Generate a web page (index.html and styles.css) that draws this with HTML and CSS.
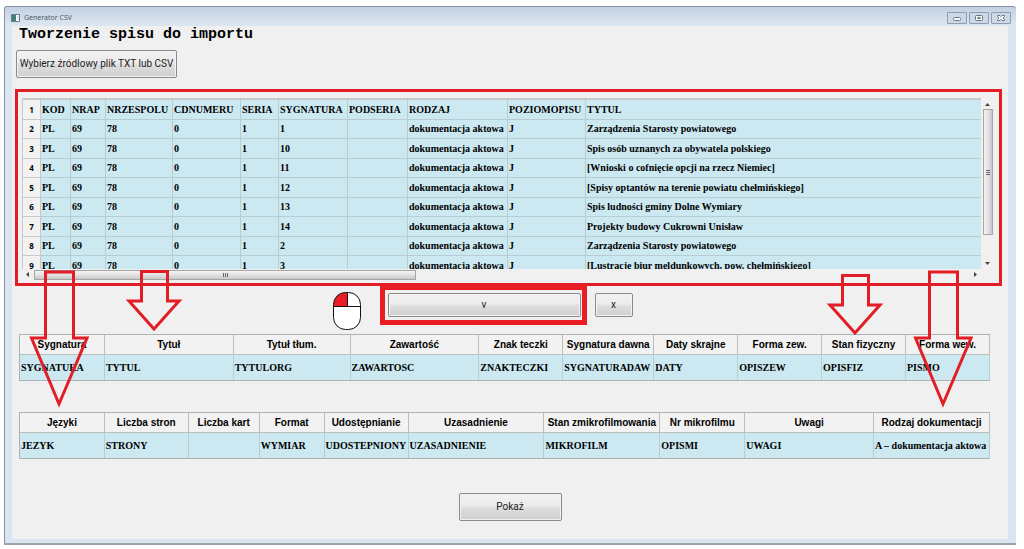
FILE: index.html
```
<!DOCTYPE html>
<html lang="pl">
<head>
<meta charset="utf-8">
<meta name="viewport" content="width=device-width, initial-scale=1">
<title>Generator CSV</title>
<link rel="stylesheet" href="styles.css">
</head>
<body>
<div class="window">
  <header class="titlebar">
    <svg class="app-icon" viewBox="0 0 9 8" aria-hidden="true"><rect x=".5" y=".5" width="8" height="7" fill="#fff" stroke="#6d7f8c"/><rect x="1" y="1" width="4" height="6" fill="#3f7f78"/><rect x="6" y="2" width="2" height="4" fill="#dfe9ee"/></svg>
    <span class="caption">Generator CSV</span>
    <div class="caption-buttons">
      <button class="caption-button" type="button" aria-label="Minimalizuj"><svg viewBox="0 0 8 8"><rect x=".5" y="3.500" width="7" height="3" rx="1"/></svg></button>
      <button class="caption-button" type="button" aria-label="Maksymalizuj"><svg viewBox="0 0 8 8"><rect x=".5" y="1.500" width="7" height="5" rx="1"/><rect x="3" y="3.500" width="2" height="1"/></svg></button>
      <button class="caption-button" type="button" aria-label="Zamknij"><svg viewBox="0 0 8 8"><path d="M.5 1.500h2.500l1 1 1-1h2.500v1L6 4l1.500 1.500v1H5l-1-1-1 1H.5v-1L2 4 .5 2.500z"/></svg></button>
    </div>
  </header>
  <main class="client">
    <h1 class="heading">Tworzenie spisu do importu</h1>
    <button class="button button-file" type="button">Wybierz źródłowy plik TXT lub CSV</button>

    <section class="preview">
      <div class="viewport">
        <table class="data">
          <colgroup><col class="w19"><col class="w30"><col class="w35"><col class="w67"><col class="w68"><col class="w38"><col class="w69"><col class="w60"><col class="w100"><col class="w78"><col></colgroup>
          <tbody>
            <tr><th scope="row">1</th><td>KOD</td><td>NRAP</td><td>NRZESPOLU</td><td>CDNUMERU</td><td>SERIA</td><td>SYGNATURA</td><td>PODSERIA</td><td>RODZAJ</td><td>POZIOMOPISU</td><td>TYTUL</td></tr>
            <tr><th scope="row">2</th><td>PL</td><td>69</td><td>78</td><td>0</td><td>1</td><td>1</td><td></td><td>dokumentacja aktowa</td><td>J</td><td>Zarządzenia Starosty powiatowego</td></tr>
            <tr><th scope="row">3</th><td>PL</td><td>69</td><td>78</td><td>0</td><td>1</td><td>10</td><td></td><td>dokumentacja aktowa</td><td>J</td><td>Spis osób uznanych za obywatela polskiego</td></tr>
            <tr><th scope="row">4</th><td>PL</td><td>69</td><td>78</td><td>0</td><td>1</td><td>11</td><td></td><td>dokumentacja aktowa</td><td>J</td><td>[Wnioski o cofnięcie opcji na rzecz Niemiec]</td></tr>
            <tr><th scope="row">5</th><td>PL</td><td>69</td><td>78</td><td>0</td><td>1</td><td>12</td><td></td><td>dokumentacja aktowa</td><td>J</td><td>[Spisy optantów na terenie powiatu chełmińskiego]</td></tr>
            <tr><th scope="row">6</th><td>PL</td><td>69</td><td>78</td><td>0</td><td>1</td><td>13</td><td></td><td>dokumentacja aktowa</td><td>J</td><td>Spis ludności gminy Dolne Wymiary</td></tr>
            <tr><th scope="row">7</th><td>PL</td><td>69</td><td>78</td><td>0</td><td>1</td><td>14</td><td></td><td>dokumentacja aktowa</td><td>J</td><td>Projekty budowy Cukrowni Unisław</td></tr>
            <tr><th scope="row">8</th><td>PL</td><td>69</td><td>78</td><td>0</td><td>1</td><td>2</td><td></td><td>dokumentacja aktowa</td><td>J</td><td>Zarządzenia Starosty powiatowego</td></tr>
            <tr><th scope="row">9</th><td>PL</td><td>69</td><td>78</td><td>0</td><td>1</td><td>3</td><td></td><td>dokumentacja aktowa</td><td>J</td><td>[Lustracje biur meldunkowych, pow. chełmińskiego]</td></tr>
          </tbody>
        </table>
      </div>
      <div class="scroll-v">
        <svg class="tick" viewBox="0 0 5 3"><path d="M0 3L2.500 0 5 3z"/></svg>
        <div class="thumb-v"><svg class="grip-v" viewBox="0 0 4 5"><path d="M0 0h4v1H0zM0 2h4v1H0zM0 4h4v1H0z"/></svg></div>
        <svg class="tick" viewBox="0 0 5 3"><path d="M0 0h5L2.500 3z"/></svg>
      </div>
      <div class="scroll-h">
        <svg class="tick-side" viewBox="0 0 3 5"><path d="M3 0v5L0 2.500z"/></svg>
        <div class="thumb-h"><svg class="grip-h" viewBox="0 0 5 4"><path d="M0 0h1v4H0zM2 0h1v4H2zM4 0h1v4H4z"/></svg></div>
        <svg class="tick-side" viewBox="0 0 3 5"><path d="M0 0v5l3-2.500z"/></svg>
      </div>
    </section>

    <div class="actions">
      <div class="highlight"><button class="button button-accept" type="button">v</button></div>
      <button class="button button-clear" type="button">x</button>
    </div>

    <table class="mapping">
      <colgroup><col class="w85"><col class="w129"><col class="w117"><col class="w129"><col class="w84"><col class="w91"><col class="w84"><col class="w84"><col class="w84"><col class="w84"></colgroup>
      <thead><tr><th>Sygnatura</th><th>Tytuł</th><th>Tytuł tłum.</th><th>Zawartość</th><th>Znak teczki</th><th>Sygnatura dawna</th><th>Daty skrajne</th><th>Forma zew.</th><th>Stan fizyczny</th><th>Forma wew.</th></tr></thead>
      <tbody><tr><td>SYGNATURA</td><td>TYTUL</td><td>TYTULORG</td><td>ZAWARTOSC</td><td>ZNAKTECZKI</td><td>SYGNATURADAW</td><td>DATY</td><td>OPISZEW</td><td>OPISFIZ</td><td>PISMO</td></tr></tbody>
    </table>

    <table class="mapping">
      <colgroup><col class="w85"><col class="w84"><col class="w71"><col class="w65"><col class="w84"><col class="w136"><col class="w116"><col class="w85"><col class="w129"><col class="w116"></colgroup>
      <thead><tr><th>Języki</th><th>Liczba stron</th><th>Liczba kart</th><th>Format</th><th>Udostępnianie</th><th>Uzasadnienie</th><th>Stan zmikrofilmowania</th><th>Nr mikrofilmu</th><th>Uwagi</th><th>Rodzaj dokumentacji</th></tr></thead>
      <tbody><tr><td>JEZYK</td><td>STRONY</td><td></td><td>WYMIAR</td><td>UDOSTEPNIONY</td><td>UZASADNIENIE</td><td>MIKROFILM</td><td>OPISMI</td><td>UWAGI</td><td>A – dokumentacja aktowa</td></tr></tbody>
    </table>

    <button class="button button-show" type="button">Pokaż</button>
  </main>
</div>

<svg class="mark long long-left" viewBox="0 0 62 140" aria-hidden="true"><path d="M17.500 3H45.500V69H59L31 135 3.500 69H17.500z"/></svg>
<svg class="mark long long-right" viewBox="0 0 62 140" aria-hidden="true"><path d="M17.500 3H45.500V69H59L31 135 3.500 69H17.500z"/></svg>
<svg class="mark short short-left" viewBox="0 0 60 66" aria-hidden="true"><path d="M17.500 3.500H43.500V33H55L30 61 5 33H17.500z"/></svg>
<svg class="mark short short-right" viewBox="0 0 60 66" aria-hidden="true"><path d="M17.500 3.500H43.500V33H55L30 61 5 33H17.500z"/></svg>
<svg class="mouse" viewBox="0 0 28 40" aria-hidden="true"><rect x=".5" y="1.500" width="27" height="37" rx="12" ry="12" fill="#fff"/><path d="M14 1.500H12.500C6 1.500.5 7 .5 14v1H14z" fill="#ea1c24"/><g fill="none" stroke="#111"><rect x=".5" y="1.500" width="27" height="37" rx="12" ry="12"/><path d="M1 15.500h26M14.500 1v14.500"/></g></svg>
</body>
</html>
```
FILE: styles.css
```
* { box-sizing: border-box; }

body {
  margin: 0;
  padding: 6px 8px 4px 4px;
  min-height: 100vh;
  display: flex;
  background: #fff;
  color: #000;
  font-family: "Liberation Sans", Arial, sans-serif;
  font-size: 10px;
  position: relative;
}

.window {
  flex: 1;
  min-width: 0;
  display: flex;
  flex-direction: column;
  padding: 0 8px 4px 7px;
  border: 1px solid #8593a1;
  border-right: 0;
  border-bottom: 2px solid #98a3ae;
  border-radius: 3px 3px 0 0;
  background: linear-gradient(#c3d1e2, #dce6f1 18px, #d9e5f1);
}

/* title bar */
.titlebar {
  display: flex;
  align-items: center;
  gap: 4px;
  height: 19px;
  margin: 0 -3px 0 -1px;
  padding-top: 3px;
}
.app-icon { width: 9px; height: 8px; }
.caption {
  font-family: "Noto Sans", "Open Sans", sans-serif;
  font-size: 7px;
  line-height: 12px;
  color: #4c5968;
}
.caption-buttons { display: flex; gap: 2px; margin-left: auto; }
.caption-button {
  display: flex;
  align-items: center;
  justify-content: center;
  width: 20px;
  height: 12px;
  padding: 0;
  border: 1px solid #8e9db0;
  border-radius: 1px;
  background: #ccd8e6;
}
.caption-button svg { width: 8px; height: 8px; fill: #f4f7fa; stroke: #6b7684; }

/* client area */
.client {
  flex: 1;
  display: flex;
  flex-direction: column;
  padding: 0 6px 0 3px;
  background: #f0f0f0;
}
.heading {
  margin: 0 0 7px 4px;
  font: bold 15px/17px "Liberation Mono", "Courier New", monospace;
}
.button {
  padding: 0;
  border: 1px solid #8a8a8a;
  border-radius: 2px;
  background: linear-gradient(#f2f2f2, #ebebeb 45%, #dddddd 55%, #d0d0d0);
  box-shadow: inset 0 0 0 1px #f3f3f3;
  color: #222;
  font: 10px/14px Roboto, "Liberation Sans", Arial, sans-serif;
}
.button-file { align-self: flex-start; width: 161px; height: 28px; margin-left: 1px; }

/* source preview */
.preview {
  display: grid;
  grid-template-columns: minmax(0, 1fr) 12px;
  grid-template-rows: 171px 11px;
  margin-top: 11px;
  padding: 6px 6px 3px 4px;
  border: 3px solid #e31d25;
}
.viewport { overflow: hidden; border-top: 2px solid #c3cbcd; }
table { width: 100%; border-spacing: 0; table-layout: fixed; }
th, td { padding: 0; white-space: nowrap; overflow: hidden; }
td {
  background: #cce9f2;
  font: bold 10px/14px "Liberation Serif", "Times New Roman", serif;
}
.data th, .data td {
  height: 20px;
  padding-left: 1px;
  border-right: 1px solid #b5cdd3;
  border-bottom: 1px solid #b5cdd3;
}
.data tr:nth-child(even) > * { height: 19px; }
.data th {
  padding-left: 0;
  background: #f2f2f2;
  border-color: #c8c8c8;
  border-left: 1px solid #c8c8c8;
  font: bold 8px/12px "Open Sans", "Noto Sans", sans-serif;
}
.data td:last-child { border-right: 0; }

.scroll-v { display: flex; flex-direction: column; align-items: center; justify-content: space-between; padding: 5px 0 4px 1px; }
.tick { width: 5px; height: 3px; fill: #444; }
.thumb-v {
  width: 10px;
  height: 126px;
  margin: 3px 0 auto;
  display: flex;
  align-items: center;
  justify-content: center;
  border: 1px solid #a5a5a5;
  background: linear-gradient(90deg, #f4f4f4, #e4e4e4 50%, #c6c6cb);
}
.scroll-h { display: flex; align-items: center; padding: 0 4px; }
.tick-side { width: 3px; height: 5px; fill: #444; }
.thumb-h {
  width: 382px;
  height: 10px;
  margin: 0 auto 0 5px;
  display: flex;
  align-items: center;
  justify-content: center;
  border: 1px solid #a5a5a5;
  background: linear-gradient(#f4f4f4, #e2e2e2 50%, #c8c8c8);
}
.grip-v { width: 4px; height: 5px; fill: #666; }
.grip-h { width: 5px; height: 4px; fill: #666; }

/* transfer buttons */
.actions {
  display: flex;
  align-items: center;
  justify-content: center;
  gap: 8px;
  margin: -1px 0 9px;
  padding-right: 5px;
}
.highlight { display: flex; padding: 3px 1px 3px 3px; border: 5px solid #ea1c24; }
.button-accept { width: 193px; height: 24px; }
.button-clear { width: 38px; height: 24px; }

/* field mapping */
.mapping {
  width: auto;
  margin: 0 12px 31px 4px;
  min-width: calc(100% - 16px);
  border: 1px solid #a9b3b6;
  border-right: 0;
}
.mapping th {
  height: 20px;
  border-right: 1px solid #bdbdbd;
  border-bottom: 1px solid #bdbdbd;
  background: #f2f2f2;
  font: bold 10px/14px "Liberation Sans", Arial, sans-serif;
}
.mapping td { height: 25px; padding-left: 1px; border-right: 1px solid #b5cdd3; }
.button-show { align-self: center; width: 103px; height: 28px; margin: 3px 0 0 3px; }

/* column widths */
.w19 { width: 19px; }
.w30 { width: 30px; }
.w35 { width: 35px; }
.w38 { width: 38px; }
.w60 { width: 60px; }
.w65 { width: 65px; }
.w67 { width: 67px; }
.w68 { width: 68px; }
.w69 { width: 69px; }
.w71 { width: 71px; }
.w78 { width: 78px; }
.w84 { width: 84px; }
.w85 { width: 85px; }
.w91 { width: 91px; }
.w100 { width: 100px; }
.w116 { width: 116px; }
.w117 { width: 117px; }
.w129 { width: 129px; }
.w136 { width: 136px; }

/* annotations drawn over the window */
.mark { position: absolute; fill: none; stroke: #e31d25; stroke-width: 3; pointer-events: none; }
.long { width: 62px; height: 140px; top: 269px; }
.long-left { left: 28px; }
.long-right { right: 50px; }
.short { width: 60px; height: 66px; }
.short-left { left: 124px; top: 268px; }
.short-right { right: 139px; top: 272px; }
.mouse { position: absolute; left: 333px; top: 291px; width: 28px; height: 40px; }
```
